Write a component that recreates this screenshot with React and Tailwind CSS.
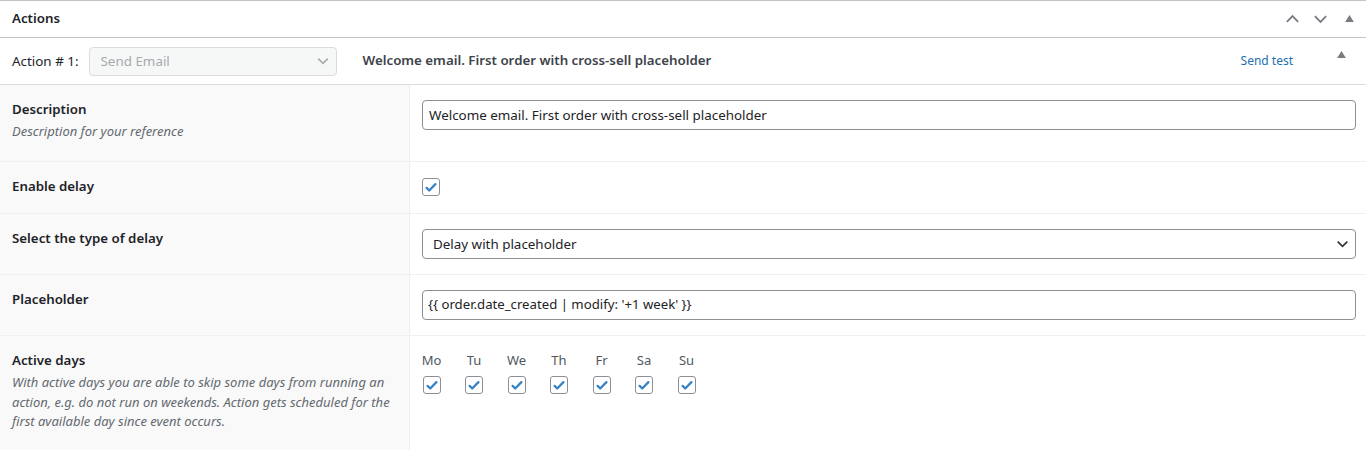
import React from "react";

const DAYS = ["Mo", "Tu", "We", "Th", "Fr", "Sa", "Su"];

function Check() {
  return (
    <span className="flex h-[18px] w-[18px] items-center justify-center rounded-[3px] border border-[#8c8f94] bg-white">
      <svg viewBox="0 0 20 20" className="h-[17px] w-[17px]">
        <path
          d="M4.5 10.5l3.3 3.3L15.5 5.8"
          fill="none"
          stroke="#3582c4"
          strokeWidth="2.8"
          strokeLinecap="round"
          strokeLinejoin="round"
        />
      </svg>
    </span>
  );
}

function Chevron({ up, className }) {
  return (
    <svg viewBox="0 0 16 10" className={className}>
      <path
        d={up ? "M2 8l6-6 6 6" : "M2 2l6 6 6-6"}
        fill="none"
        stroke="currentColor"
        strokeWidth="2"
      />
    </svg>
  );
}

function Triangle() {
  return (
    <svg viewBox="0 0 10 8" className="h-[7px] w-[9px] text-[#787c82]">
      <path d="M5 0l5 8H0z" fill="currentColor" />
    </svg>
  );
}

function Row({ label, desc, height, children }) {
  return (
    <div className={`flex border-b border-[#f0f0f1] ${height}`}>
      <div className="w-[410px] shrink-0 border-r border-[#f0f0f1] bg-[#f9f9f9] pl-3 pr-4 pt-[14px]">
        <div className="text-[13.3px] font-semibold leading-5 text-[#1d2327]">{label}</div>
        {desc && (
          <p className="mt-[3px] text-[13px] italic leading-[19.5px] text-[#646970]">{desc}</p>
        )}
      </div>
      <div className="flex-1 pl-3 pr-[10px] pt-[15px]">{children}</div>
    </div>
  );
}

export default function App() {
  return (
    <div
      className="w-[1366px] bg-white text-[#1d2327]"
      style={{ fontFamily: '"Noto Sans", "Open Sans", sans-serif' }}
    >
      <div className="flex h-[38px] items-center border-y border-[#c3c4c7] pl-3 pr-[12px]">
        <h2 className="flex-1 text-[13.3px] font-semibold">Actions</h2>
        <div className="flex items-center gap-[13px] text-[#787c82]">
          <Chevron up className="h-[10px] w-[15px]" />
          <Chevron className="h-[10px] w-[15px]" />
          <span className="ml-[4px] mb-[2px]">
            <Triangle />
          </span>
        </div>
      </div>

      <div className="flex h-[47px] items-center border-b border-[#dcdcde] pl-3 pr-[20px]">
        <span className="text-[13.4px] text-[#1d2327]">Action # 1:</span>
        <div className="ml-[10px] flex h-[29px] w-[248px] items-center justify-between rounded-[4px] border border-[#dcdcde] bg-[#f6f7f7] pl-[11px] pr-[6px] text-[13.4px] text-[#a7aaad]">
          <span>Send Email</span>
          <Chevron className="h-[8px] w-[14px] text-[#a7aaad]" />
        </div>
        <span className="ml-[26px] flex-1 text-[13.3px] font-semibold text-[#3c434a]">
          Welcome email. First order with cross-sell placeholder
        </span>
        <a className="mr-[44px] text-[12px] text-[#2271b1]">Send test</a>
        <span className="mb-[14px]">
          <Triangle />
        </span>
      </div>

      <Row label="Description" desc="Description for your reference" height="h-[77px]">
        <div className="flex h-[30px] items-center rounded-[4px] border border-[#8c8f94] px-[6px] text-[13.4px]">
          Welcome email. First order with cross-sell placeholder
        </div>
      </Row>

      <Row label="Enable delay" height="h-[52px]">
        <div className="pt-px">
          <Check />
        </div>
      </Row>

      <Row label="Select the type of delay" height="h-[61px]">
        <div className="flex h-[30px] items-center justify-between rounded-[4px] border border-[#8c8f94] pl-[10px] pr-[6px] text-[13.4px]">
          <span>Delay with placeholder</span>
          <Chevron className="h-[8px] w-[13px] text-[#2c3338]" />
        </div>
      </Row>

      <Row label="Placeholder" height="h-[61px]">
        <div className="flex h-[30px] items-center rounded-[4px] border border-[#8c8f94] px-[5px] text-[13.2px]">
          {"{{ order.date_created | modify: '+1 week' }}"}
        </div>
      </Row>

      <div className="flex h-[115px]">
        <div className="w-[410px] shrink-0 border-r border-[#f0f0f1] bg-[#f9f9f9] pl-3 pr-4 pt-[14px]">
          <div className="text-[13.3px] font-semibold leading-5 text-[#1d2327]">Active days</div>
          <p className="mt-[3px] text-[13px] italic leading-[19.5px] text-[#646970]">
            With active days you are able to skip some days from running an action, e.g. do not
            run on weekends. Action gets scheduled for the first available day since event
            occurs.
          </p>
        </div>
        <div className="flex flex-1 gap-[23.5px] pl-3 pt-[14px]">
          {DAYS.map((d) => (
            <div key={d} className="flex w-[19px] flex-col items-center gap-[6px]">
              <span className="text-[13px] leading-5 text-[#50575e]">{d}</span>
              <Check />
            </div>
          ))}
        </div>
      </div>
    </div>
  );
}
